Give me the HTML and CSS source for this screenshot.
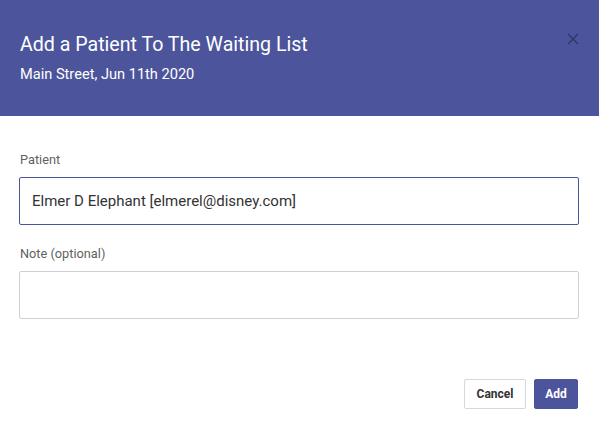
FILE: index.html
```html
<!DOCTYPE html>
<html>
<head>
<meta charset="utf-8">
<link rel="stylesheet" href="styles.css">
</head>
<body>
<div class="dialog">
  <header class="dialog-header">
    <div class="titles">
      <h1 class="title">Add a Patient To The Waiting List</h1>
      <p class="subtitle">Main Street, Jun 11th 2020</p>
    </div>
    <button class="close" aria-label="Close">
      <svg width="12" height="12" viewBox="0 0 12 12"><path d="M1 1L11 11M11 1L1 11" stroke="#2f3569" stroke-width="1.3" fill="none"/></svg>
    </button>
  </header>
  <main class="dialog-body">
    <div class="field">
      <label class="label">Patient</label>
      <div class="input active">Elmer D Elephant [elmerel@disney.com]</div>
    </div>
    <div class="field">
      <label class="label">Note (optional)</label>
      <div class="input"></div>
    </div>
  </main>
  <footer class="dialog-footer">
    <button class="btn btn-cancel">Cancel</button>
    <button class="btn btn-add">Add</button>
  </footer>
</div>
</body>
</html>
```

FILE: styles.css
```css
html, body {
  margin: 0;
  padding: 0;
  background: #ffffff;
  font-family: Roboto, "Liberation Sans", sans-serif;
}
.dialog {
  width: 599px;
  height: 426px;
  display: flex;
  flex-direction: column;
}
.dialog-header {
  height: 116px;
  background: #4c559b;
  display: flex;
  justify-content: space-between;
  align-items: flex-start;
  padding: 0 20px;
  box-sizing: border-box;
}
.titles {
  height: 116px;
  display: flex;
  flex-direction: column;
  justify-content: center;
}
.title {
  margin: 0;
  font-size: 19.6px;
  font-weight: 400;
  color: #ffffff;
  line-height: 24px;
}
.subtitle {
  margin: 8px 0 0 0;
  font-size: 14.6px;
  color: #ffffff;
  line-height: 18px;
}
.close {
  margin-top: 33px;
  margin-right: 0;
  padding: 0;
  border: none;
  background: transparent;
  width: 12px;
  height: 12px;
  display: flex;
}
.dialog-body {
  padding: 36px 20px 0 19px;
  display: flex;
  flex-direction: column;
  gap: 21px;
}
.field {
  display: flex;
  flex-direction: column;
}
.label {
  font-size: 12.75px;
  color: #5f5f5f;
  line-height: 15px;
  margin-left: 1px;
  margin-bottom: 10px;
}
.input {
  height: 46px;
  border: 1px solid #cfcfd4;
  border-radius: 2px;
  box-sizing: content-box;
  font-size: 15px;
  color: #333333;
  line-height: 46px;
  padding: 0 12px;
}
.input.active {
  border-color: #4c559b;
}
.dialog-footer {
  display: flex;
  justify-content: flex-end;
  gap: 8px;
  padding: 0 21px 0 0;
  margin-top: 60px;
}
.btn {
  height: 30px;
  font-family: Roboto, "Liberation Sans", sans-serif;
  font-size: 12px;
  font-weight: 700;
  border-radius: 2px;
  padding: 0 10px;
  cursor: pointer;
}
.btn-cancel {
  background: #ffffff;
  border: 1px solid #d8d8d8;
  color: #333333;
  width: 62px;
}
.btn-add {
  background: #4c559b;
  border: 1px solid #4c559b;
  color: #ffffff;
  width: 44px;
}
```
